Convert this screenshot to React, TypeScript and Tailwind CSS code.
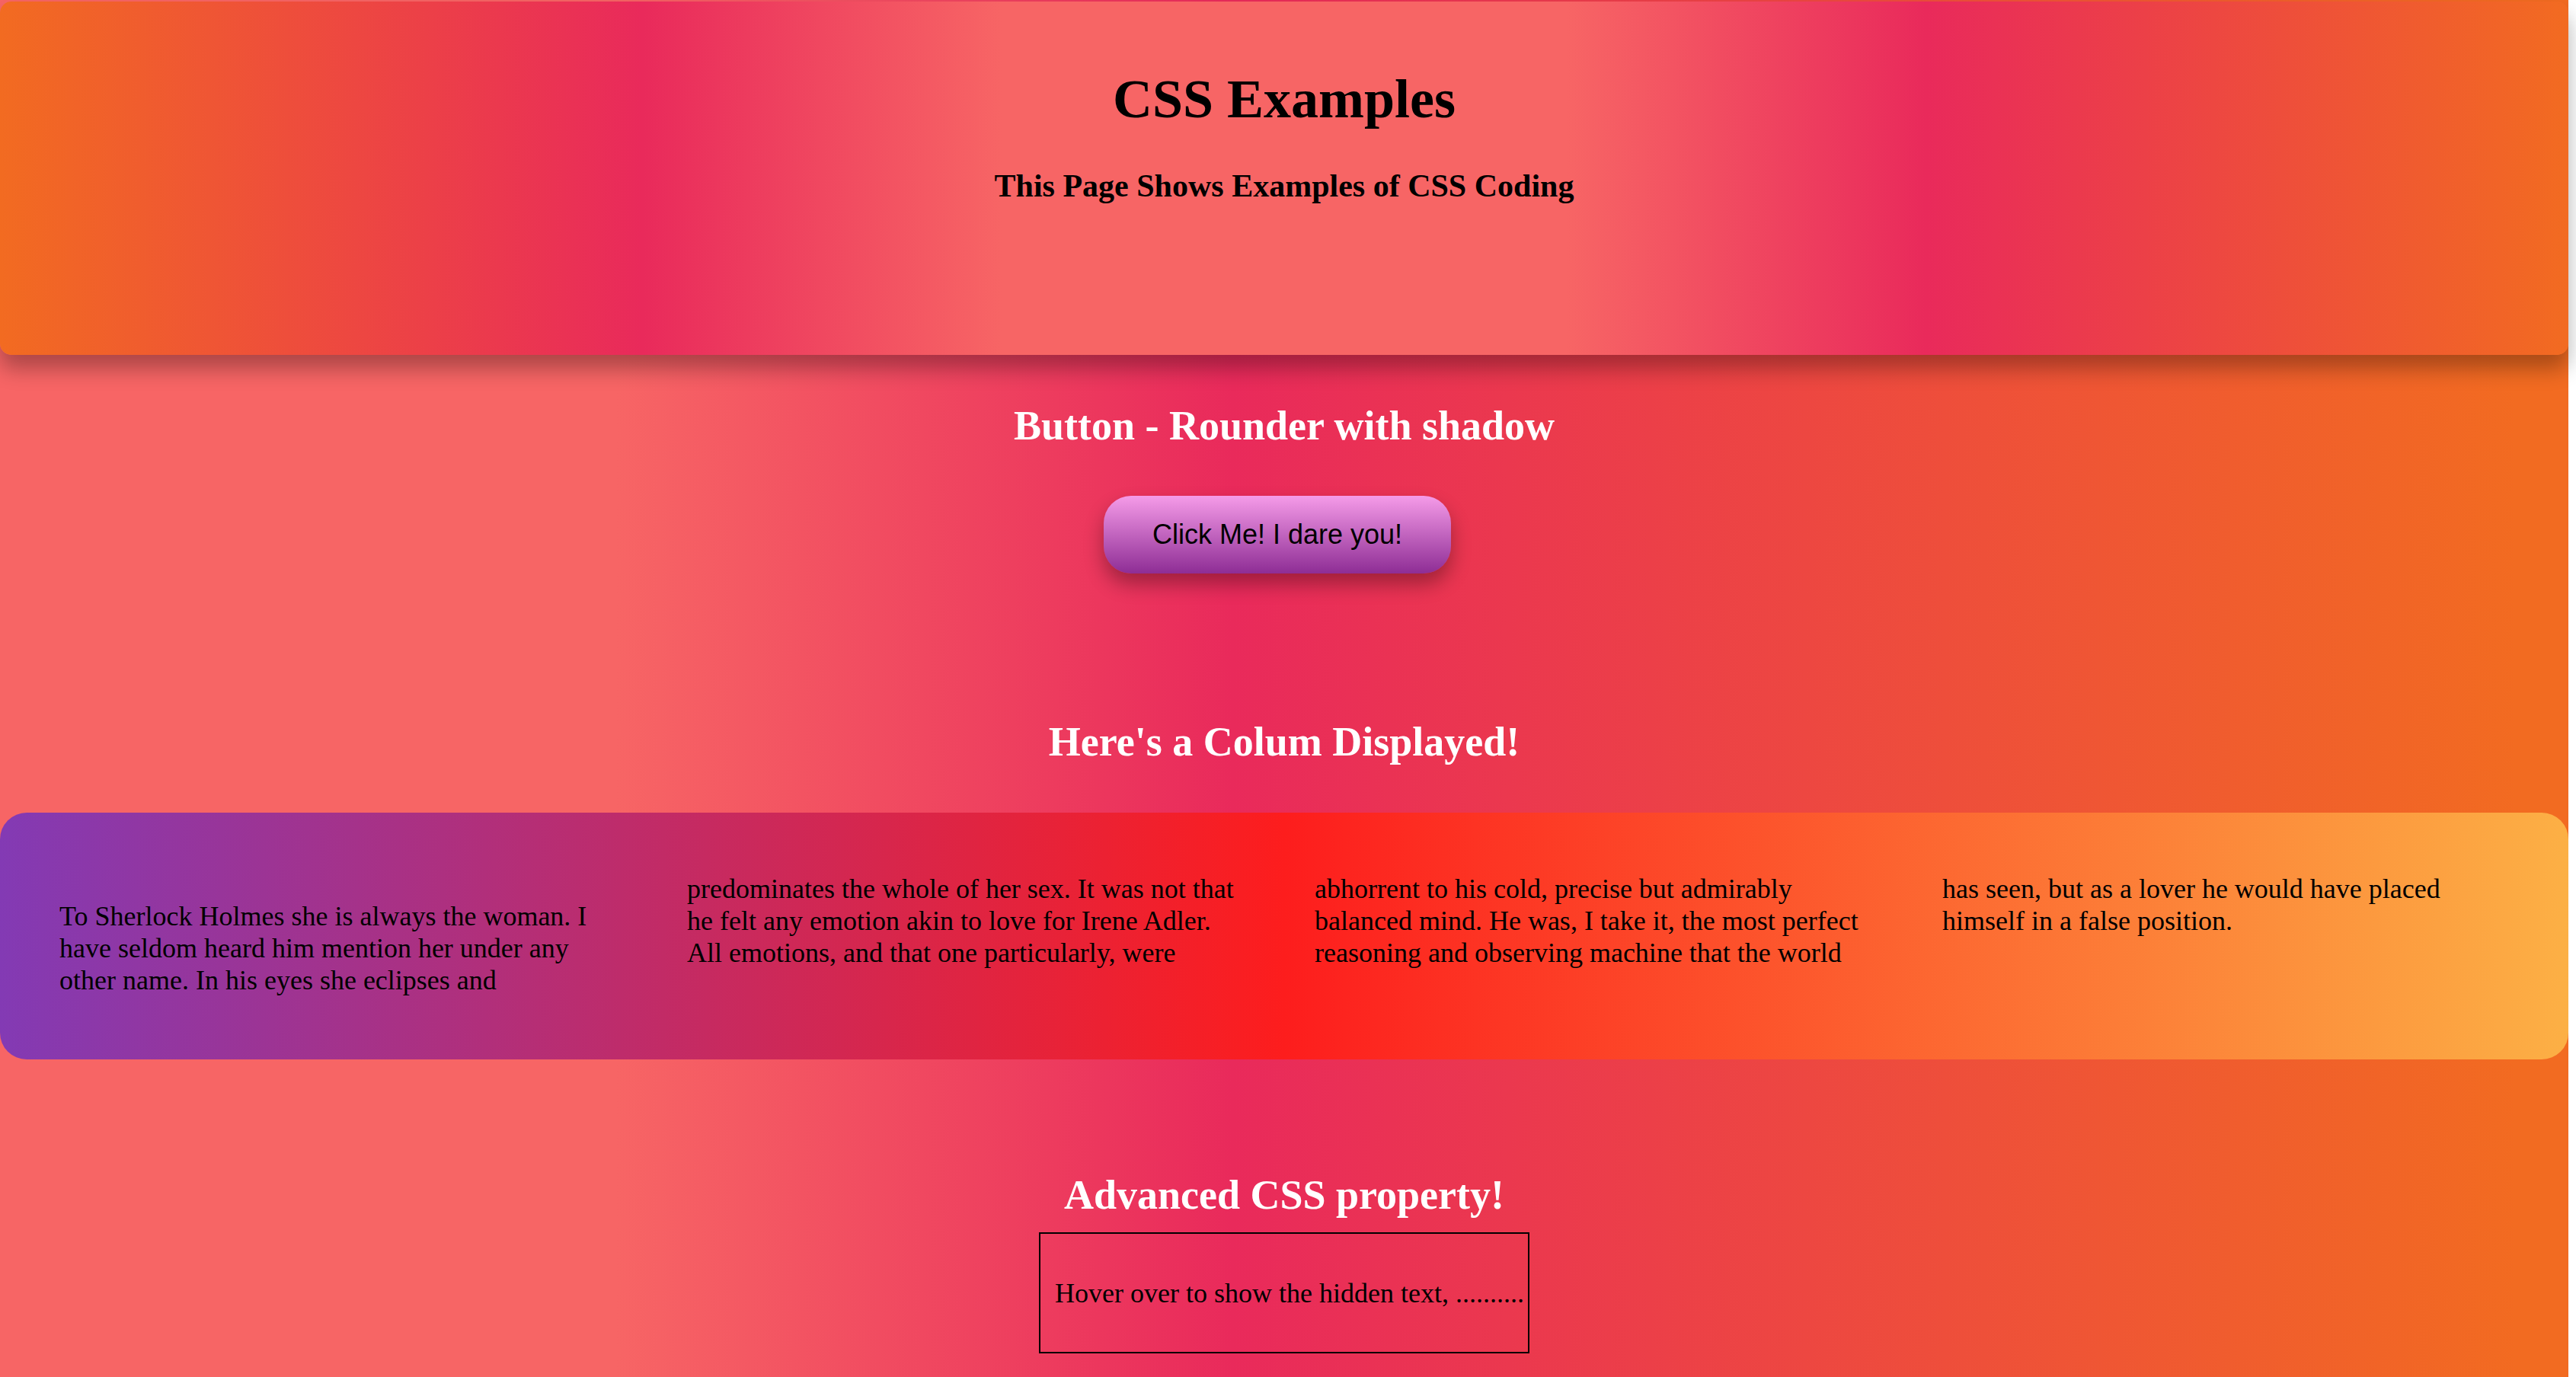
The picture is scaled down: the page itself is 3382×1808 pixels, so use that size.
import React from "react";

const serif = "font-['Liberation_Serif','Times_New_Roman',serif]";

const columnTexts = [
  "To Sherlock Holmes she is always the woman. I have seldom heard him mention her under any other name. In his eyes she eclipses and",
  "predominates the whole of her sex. It was not that he felt any emotion akin to love for Irene Adler. All emotions, and that one particularly, were",
  "abhorrent to his cold, precise but admirably balanced mind. He was, I take it, the most perfect reasoning and observing machine that the world",
  "has seen, but as a lover he would have placed himself in a false position.",
];

export default function App() {
  return (
    <div className="min-h-screen w-full bg-white">
      <div
        className={`w-[3372px] min-h-[1808px] pt-[2px] pb-[60px] flex flex-col items-center leading-[normal] bg-[linear-gradient(to_right,#f76565_24%,#e92a5b_48%,#f26b21_98%)] ${serif}`}
      >
        <header className="w-full h-[464px] pt-[87px] flex flex-col items-center rounded-[15px] shadow-[0_18px_28px_rgba(0,0,0,0.3)] bg-[linear-gradient(to_right,#f26b21_0%,#e92a5b_25%,#f76565_39%,#f76565_61%,#e92a5b_75%,#f26b21_100%)]">
          <h1 className="m-0 text-[72px] font-bold text-black leading-[normal]">CSS Examples</h1>
          <h3 className="mt-[48px] text-[42px] font-bold text-black leading-[normal]">
            This Page Shows Examples of CSS Coding
          </h3>
        </header>

        <h2 className="mt-[62px] text-[54px] font-bold text-white leading-[normal]">
          Button - Rounder with shadow
        </h2>

        <button
          type="button"
          className="mt-[61px] mr-[18px] w-[456px] h-[102px] flex items-center justify-center rounded-[36px] text-[36px] text-black leading-[normal] font-['Liberation_Sans',Arial,sans-serif] bg-[linear-gradient(to_bottom,#f59be8,#8e2d95)] shadow-[0_14px_26px_rgba(0,0,0,0.32)]"
        >
          Click Me! I dare you!
        </button>

        <h2 className="mt-[190px] text-[54px] font-bold text-white leading-[normal]">
          Here's a Colum Displayed!
        </h2>

        <div className="mt-[62px] w-full rounded-[35px] px-[78px] pt-[79px] pb-[83px] bg-[linear-gradient(to_right,#833ab4,#fd1d1d_50%,#fcb045)]">
          <div className="grid grid-cols-[repeat(4,735px)] gap-x-[89px] items-start">
            {columnTexts.map((t, i) => (
              <p
                key={i}
                className={`${i === 0 ? "pt-[36px]" : ""} m-0 text-[36px] text-black leading-[normal]`}
              >
                {t}
              </p>
            ))}
          </div>
        </div>

        <h2 className="mt-[147px] text-[54px] font-bold text-white leading-[normal]">
          Advanced CSS property!
        </h2>

        <div className="mt-[18px] w-[644px] h-[159px] border-2 border-black flex items-center pl-[19px] overflow-hidden">
          <span className="whitespace-nowrap text-[36px] text-black leading-[normal]">
            Hover over to show the hidden text, ..........
          </span>
        </div>
      </div>
    </div>
  );
}
